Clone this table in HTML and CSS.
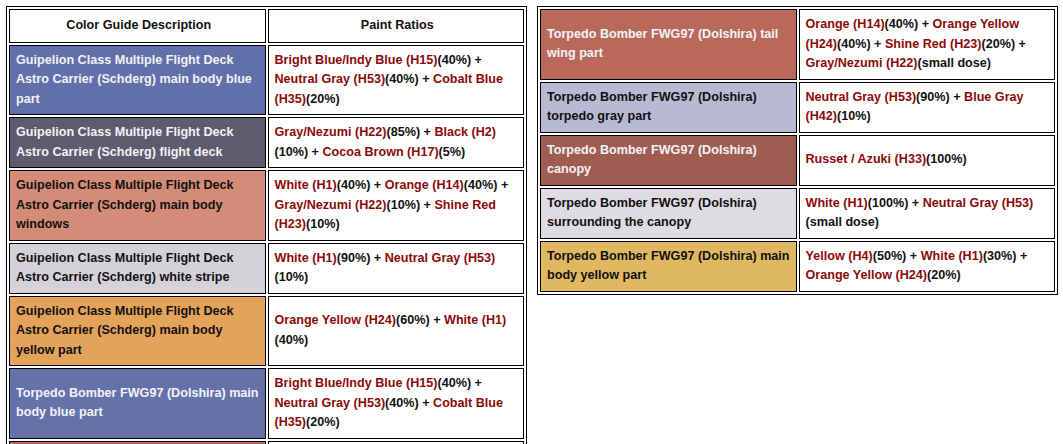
FILE: index.html
```html
<!DOCTYPE html>
<html>
<head>
<meta charset="utf-8">
<link rel="stylesheet" href="styles.css">
</head>
<body>
<div class="wrap">
<table class="guide">
  <tr><th>Color Guide Description</th><th>Paint Ratios</th></tr>
  <tr>
    <td class="c-blue light">Guipelion Class Multiple Flight Deck Astro Carrier (Schderg) main body blue part</td>
    <td><span class="p">Bright Blue/Indy Blue (H15)</span>(40%) + <span class="p">Neutral Gray (H53)</span>(40%) + <span class="p">Cobalt Blue (H35)</span>(20%)</td>
  </tr>
  <tr>
    <td class="c-deck light">Guipelion Class Multiple Flight Deck Astro Carrier (Schderg) flight deck</td>
    <td><span class="p">Gray/Nezumi (H22)</span>(85%) + <span class="p">Black (H2)</span> (10%) + <span class="p">Cocoa Brown (H17)</span>(5%)</td>
  </tr>
  <tr>
    <td class="c-salmon">Guipelion Class Multiple Flight Deck Astro Carrier (Schderg) main body windows</td>
    <td><span class="p">White (H1)</span>(40%) + <span class="p">Orange (H14)</span>(40%) + <span class="p">Gray/Nezumi (H22)</span>(10%) + <span class="p">Shine Red (H23)</span>(10%)</td>
  </tr>
  <tr>
    <td class="c-stripe">Guipelion Class Multiple Flight Deck Astro Carrier (Schderg) white stripe</td>
    <td><span class="p">White (H1)</span>(90%) + <span class="p">Neutral Gray (H53)</span> (10%)</td>
  </tr>
  <tr>
    <td class="c-orange">Guipelion Class Multiple Flight Deck Astro Carrier (Schderg) main body yellow part</td>
    <td><span class="p">Orange Yellow (H24)</span>(60%) + <span class="p">White (H1)</span> (40%)</td>
  </tr>
  <tr>
    <td class="c-blue2 light">Torpedo Bomber FWG97 (Dolshira) main body blue part</td>
    <td><span class="p">Bright Blue/Indy Blue (H15)</span>(40%) + <span class="p">Neutral Gray (H53)</span>(40%) + <span class="p">Cobalt Blue (H35)</span>(20%)</td>
  </tr>
  <tr>
    <td class="c-tail light">Torpedo Bomber FWG97 (Dolshira) tail wing part</td>
    <td><span class="p">Orange (H14)</span>(40%) + <span class="p">Orange Yellow (H24)</span>(40%) + <span class="p">Shine Red (H23)</span>(20%) + <span class="p">Gray/Nezumi (H22)</span>(small dose)</td>
  </tr>
</table>
<table class="guide">
  <tr>
    <td class="c-tail light">Torpedo Bomber FWG97 (Dolshira) tail wing part</td>
    <td><span class="p">Orange (H14)</span>(40%) + <span class="p">Orange Yellow (H24)</span>(40%) + <span class="p">Shine Red (H23)</span>(20%) + <span class="p">Gray/Nezumi (H22)</span>(small dose)</td>
  </tr>
  <tr>
    <td class="c-tgray">Torpedo Bomber FWG97 (Dolshira) torpedo gray part</td>
    <td><span class="p">Neutral Gray (H53)</span>(90%) + <span class="p">Blue Gray (H42)</span>(10%)</td>
  </tr>
  <tr>
    <td class="c-canopy light">Torpedo Bomber FWG97 (Dolshira) canopy</td>
    <td><span class="p">Russet / Azuki (H33)</span>(100%)</td>
  </tr>
  <tr>
    <td class="c-surround">Torpedo Bomber FWG97 (Dolshira) surrounding the canopy</td>
    <td><span class="p">White (H1)</span>(100%) + <span class="p">Neutral Gray (H53)</span> (small dose)</td>
  </tr>
  <tr>
    <td class="c-yellow">Torpedo Bomber FWG97 (Dolshira) main body yellow part</td>
    <td><span class="p">Yellow (H4)</span>(50%) + <span class="p">White (H1)</span>(30%) + <span class="p">Orange Yellow (H24)</span>(20%)</td>
  </tr>
</table>
</div>
</body>
</html>
```
FILE: styles.css
```css
html, body {
  margin: 0;
  padding: 0;
  background: #fff;
}
body {
  font-family: "Liberation Sans", Arial, sans-serif;
  font-size: 12.6px;
  font-weight: bold;
  color: #111;
}
.wrap {
  display: flex;
  align-items: flex-start;
  gap: 10px;
  padding: 6px 0 0 6px;
}
.guide {
  width: 521px;
  table-layout: fixed;
  border: 1px solid #000;
  border-spacing: 2px;
  flex: none;
}
.guide th,
.guide td {
  border: 1px solid #000;
  padding: 5px 3px 5px 6px;
  line-height: 19.5px;
  text-align: left;
  vertical-align: middle;
}
.guide th {
  text-align: center;
  padding-top: 6px;
  padding-bottom: 6px;
}
.p { color: #8b0a0a; }
.light { color: #f2f2f6; }
.c-blue { background: #6170a8; }
.c-deck { background: #5f5b6e; }
.c-salmon { background: #d48b78; }
.c-stripe { background: #d5d1d9; }
.c-orange { background: #e3a35b; }
.c-blue2 { background: #6572aa; }
.c-tail { background: #b9695a; }
.c-tgray { background: #b8b9d2; }
.c-canopy { background: #9f5d52; }
.c-surround { background: #dfdbe3; }
.c-yellow { background: #e0b861; }
```
